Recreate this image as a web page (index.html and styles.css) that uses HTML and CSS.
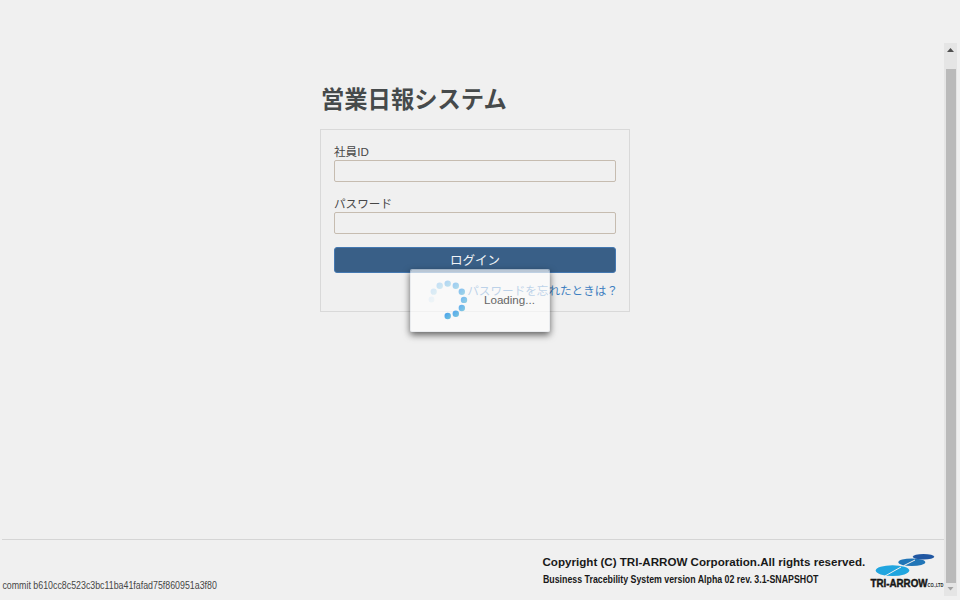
FILE: index.html
```
<!DOCTYPE html>
<html lang="ja">
<head>
<meta charset="utf-8">
<title>営業日報システム</title>
<link rel="stylesheet" href="styles.css">
</head>
<body>
<div class="page">
  <div class="content">
    <main class="login">
      <h1 class="title">営業日報システム</h1>
      <form class="panel">
        <label class="label" for="user">社員ID</label>
        <input class="field" id="user" type="text">
        <label class="label" for="pass">パスワード</label>
        <input class="field" id="pass" type="password">
        <button class="submit" type="button">ログイン</button>
        <a class="forgot">パスワードを忘れたときは？</a>
      </form>
    </main>
    <footer class="footer">
      <span class="commit">commit b610cc8c523c3bc11ba41fafad75f860951a3f80</span>
      <div class="legal">
        <div class="copyright">Copyright (C) TRI-ARROW Corporation.All rights reserved.</div>
        <div class="version">Business Tracebility System version Alpha 02 rev. 3.1-SNAPSHOT</div>
      </div>
      <svg class="logo" width="76" height="40" viewBox="868 550 76 40">
        <ellipse cx="892.5" cy="570.6" rx="16.8" ry="5.4" fill="#20a5df"/>
        <ellipse cx="911.8" cy="562.3" rx="13.5" ry="3.8" fill="#2175b7"/>
        <ellipse cx="923.5" cy="556.7" rx="10.8" ry="2.8" fill="#2057a2"/>
        <path d="M885 576 L901 567 M904 565.5 L915 560" fill="none" stroke="#f0f0f0" stroke-width="1"/>
        <text class="logo-name" x="870.5" y="587" textLength="57" lengthAdjust="spacingAndGlyphs">TRI-ARROW</text>
        <text class="logo-suffix" x="927.5" y="587" textLength="16" lengthAdjust="spacingAndGlyphs">CO.,LTD</text>
      </svg>
    </footer>
  </div>
  <div class="scrollbar">
    <svg class="arrow" width="13" height="26" viewBox="0 0 13 26"><path d="M3 9 L6.5 5 L10 9Z" fill="#505050"/></svg>
    <div class="thumb"></div>
    <svg class="arrow" width="13" height="13" viewBox="0 0 13 13"><path d="M3.5 4 L6.5 7.5 L9.500 4Z" fill="#a3a3a3"/></svg>
  </div>
</div>
<div class="loading">
  <svg class="spinner" width="42" height="42" viewBox="427 279 42 42">
    <defs><linearGradient id="dot" x1="0" y1="0" x2="1" y2="1"><stop offset="0" stop-color="#48a0f0"/><stop offset="1" stop-color="#72c4da"/></linearGradient></defs>
    <g fill="url(#dot)">
      <circle cx="431.500" cy="299.500" r="2.900" opacity=".08"/>
      <circle cx="433.700" cy="291.700" r="3.100" opacity=".2"/>
      <circle cx="439.700" cy="285.800" r="3.200" opacity=".3"/>
      <circle cx="447.700" cy="283.600" r="3.200" opacity=".42"/>
      <circle cx="455.800" cy="285.800" r="3.200" opacity=".53"/>
      <circle cx="461.800" cy="291.800" r="3.200" opacity=".65"/>
      <circle cx="464" cy="299.900" r="3.200" opacity=".75"/>
      <circle cx="461.800" cy="308" r="3.200" opacity=".85"/>
      <circle cx="455.800" cy="313.800" r="3.200" opacity=".94"/>
      <circle cx="447.700" cy="316" r="3.200"/>
    </g>
  </svg>
  <span class="loading-text">Loading...</span>
</div>
</body>
</html>
```
FILE: styles.css
```
* { box-sizing: border-box; }
body {
  margin: 0;
  background: #f0f0f0;
  color: #474747;
  font-family: "Liberation Sans", "Noto Sans CJK JP", sans-serif;
  overflow: hidden;
}
.page { display: flex; width: 960px; height: 600px; }
.content { display: flex; flex-direction: column; width: 944px; padding-left: 2px; }
.login { width: 310px; margin: 84px 0 0 318px; }
.title {
  margin: 0;
  padding-left: 1px;
  height: 45px;
  color: #464a4b;
  font-size: 23.300px;
  font-weight: 700;
  line-height: 33px;
  white-space: nowrap;
}
.panel {
  display: flex;
  flex-direction: column;
  height: 183px;
  padding: 14px 13px 0;
  border: 1px solid #d9d9d9;
}
.label { height: 16px; font-size: 11.600px; line-height: 16px; }
.field {
  width: 100%;
  height: 22px;
  margin: 0 0 14px;
  border: 1px solid #c6bcb0;
  border-radius: 2px;
  background: #f0f0f0;
}
.submit {
  height: 26px;
  margin-top: -1px;
  padding: 2px 0 0;
  border: 1px solid #4478b1;
  border-radius: 3px;
  background: #395f87;
  color: #f2f4f6;
  font: 12.500px/22px "Liberation Sans", "Noto Sans CJK JP", sans-serif;
}
.forgot {
  align-self: flex-end;
  margin: 9px -2px 0 0;
  color: #3e7fc1;
  font-size: 11.600px;
  line-height: 17px;
  white-space: nowrap;
}
.footer {
  display: flex;
  height: 61px;
  margin-top: auto;
  border-top: 1px solid #d5d5d5;
}
.commit {
  flex: none;
  width: 540.500px;
  padding: 40px 0 0 .5px;
  font-size: 10px;
  line-height: 12px;
  white-space: nowrap;
  transform: scaleX(.883);
  transform-origin: left;
}
.legal { width: 325.500px; padding-top: 14px; color: #191919; font-weight: 700; white-space: nowrap; }
.copyright { font-size: 11.600px; line-height: 16px; }
.version {
  margin-top: 4px;
  font-size: 10px;
  line-height: 12px;
  transform: scaleX(.88);
  transform-origin: left;
}
.logo { flex: none; margin-top: 10px; overflow: visible; }
.logo-name { fill: #161616; font: 700 10px "Liberation Sans", sans-serif; stroke: #161616; stroke-width: .4px; }
.logo-suffix { fill: #222; font: 700 6px "Liberation Sans", sans-serif; }
.scrollbar {
  display: flex;
  flex-direction: column;
  width: 13px;
  height: 553px;
  margin-top: 43px;
  background: #e5e5e5;
}
.arrow { display: block; flex: none; }
.thumb { flex: 1; margin: 0 1px 0 2px; background: #bababa; }
.loading {
  position: absolute;
  left: 410px;
  top: 269px;
  display: flex;
  align-items: center;
  width: 140px;
  height: 63px;
  padding: 0 0 2px 17px;
  border: 1px solid rgba(230, 233, 238, .6);
  border-radius: 2px;
  background: rgba(253, 253, 253, .66);
  background-clip: padding-box;
  box-shadow: 0 3px 7px rgba(0, 0, 0, .6);
}
.spinner { flex: none; margin-left: -1px; }
.loading-text { margin-left: 15px; color: #666; font-size: 11.600px; }
```
